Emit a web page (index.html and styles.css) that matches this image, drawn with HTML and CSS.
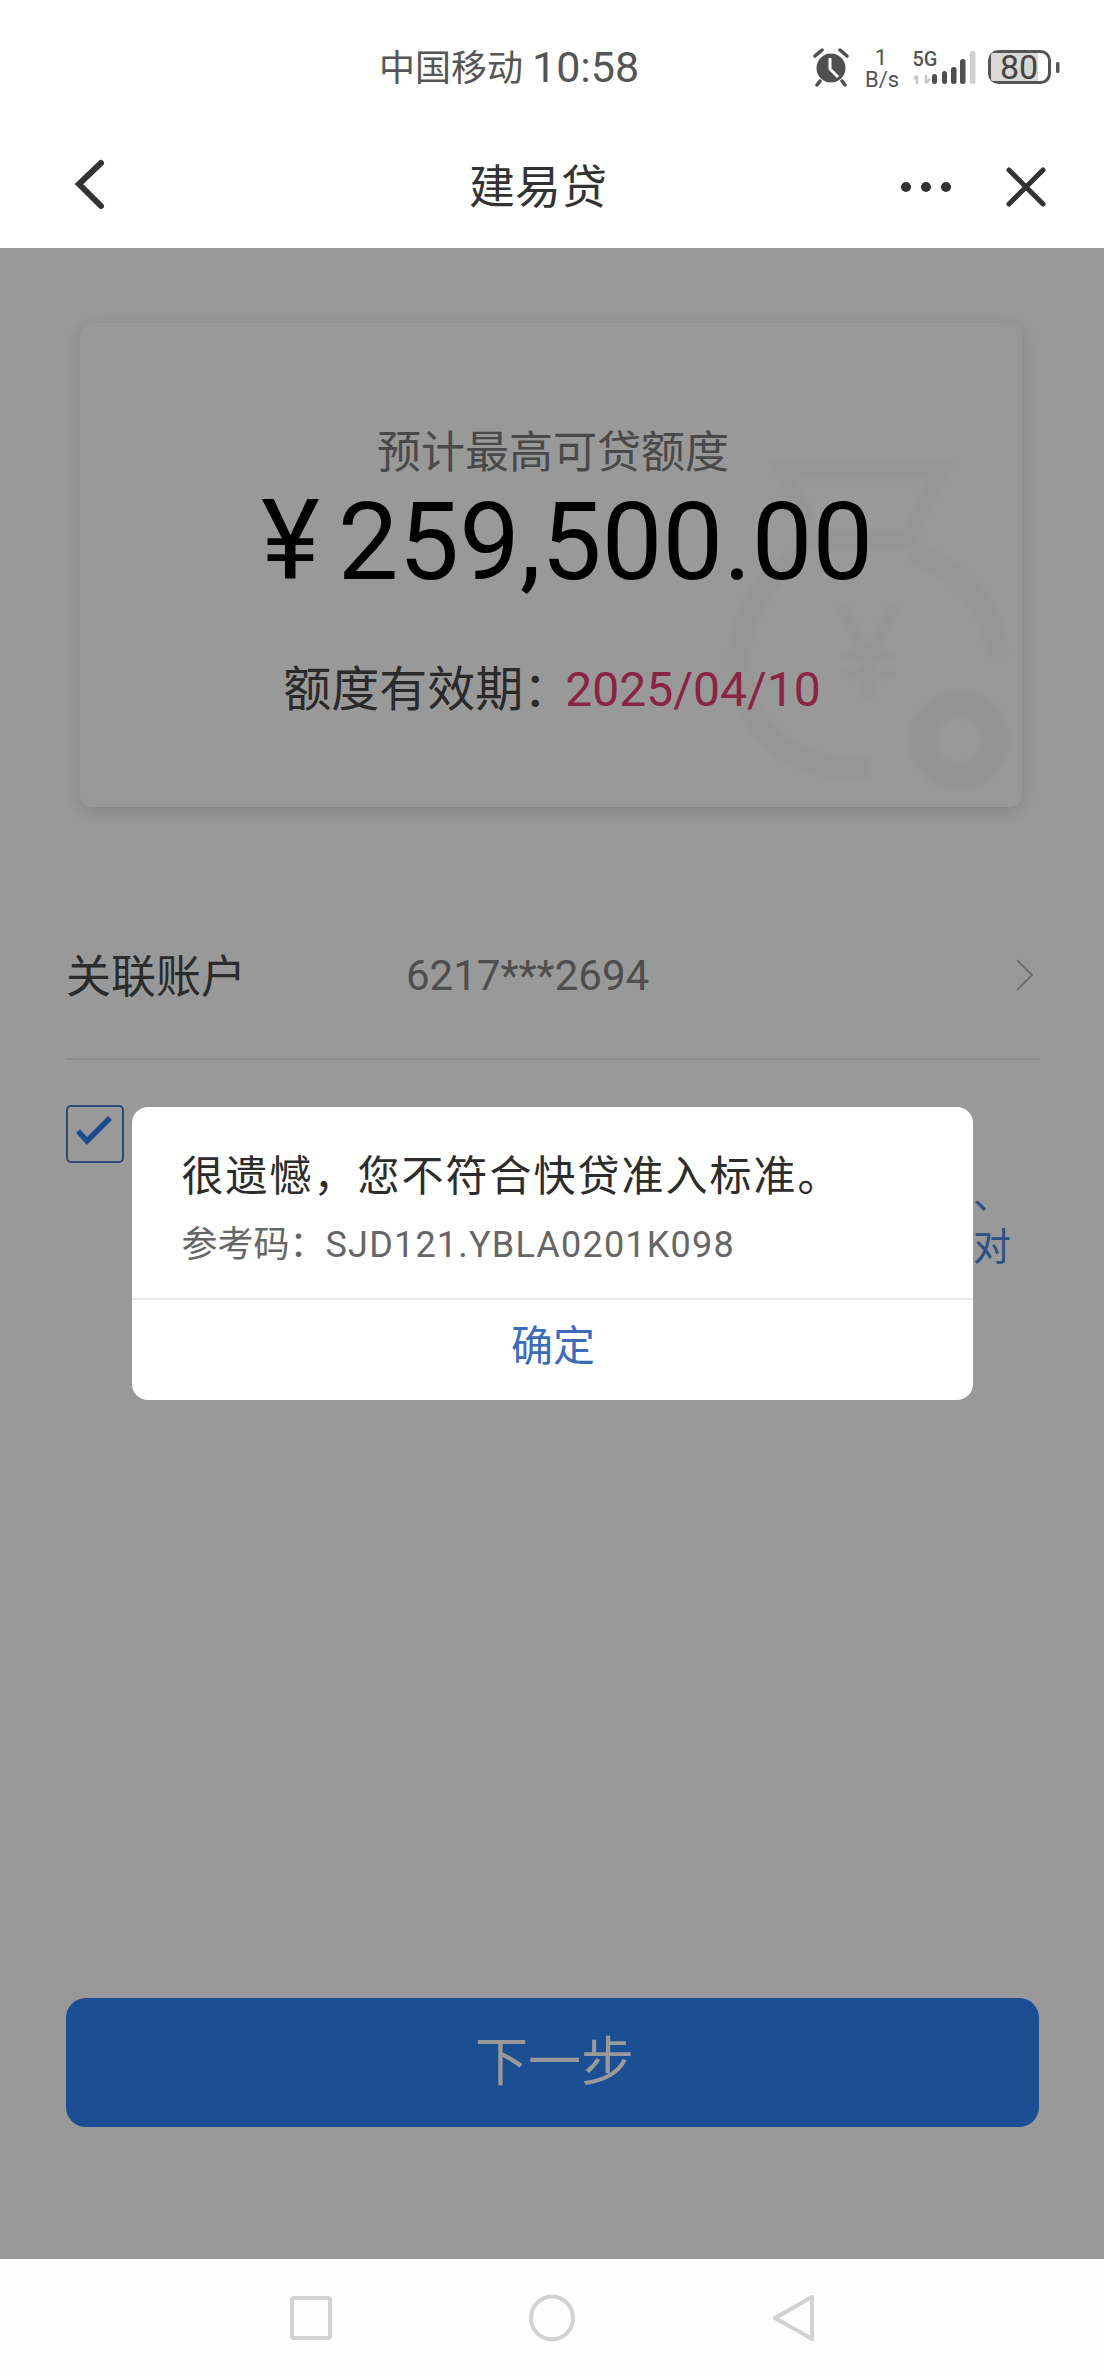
FILE: index.html
```html
<!DOCTYPE HTML>
<html>
<head>
    <meta charset="utf-8">
    <title>建易贷</title>
    <link rel="stylesheet" href="styles.css">
</head>
<body>
<div class="page">
    <div class="status-bar">
        <span class="carrier">中国移动</span>
        <span class="clock">10:58</span>
        <svg class="status-icons" width="250" height="44" viewBox="813 46 250 44">
            <circle cx="831" cy="68" r="14.5" fill="#4f4f4f"/>
            <path d="M830 58 L830 69 L838 77" fill="none" stroke="#fff" stroke-width="3"/>
            <path d="M815 56 L822 50 M847 56 L840 50 M820 81 L817 85 M842 81 L845 85" stroke="#4f4f4f" stroke-width="3.5" stroke-linecap="round"/>
            <text class="speed-text" x="881" y="65" text-anchor="middle">1</text>
            <text class="speed-text" x="882" y="87" text-anchor="middle">B/s</text>
            <text class="sim-text" x="925" y="66" text-anchor="middle">5G</text>
            <path d="M917 76 V84 M914 79 L917 76 M926 75 V83 M926 83 L930 79" stroke="#c8c8c8" stroke-width="2.5" fill="none"/>
            <rect x="932" y="74" width="5" height="10" rx="2.5" fill="#4f4f4f"/>
            <rect x="942" y="71" width="5" height="13" rx="2.5" fill="#4f4f4f"/>
            <rect x="951" y="67" width="5.5" height="17" rx="2.5" fill="#4f4f4f"/>
            <rect x="960" y="59" width="5.5" height="25" rx="2.5" fill="#4f4f4f"/>
            <rect x="970" y="51" width="5.5" height="33" rx="2.5" fill="#cfcfcf"/>
            <rect x="989.5" y="51.5" width="60" height="31" rx="9" fill="#fff" stroke="#555" stroke-width="3"/>
            <path d="M993 53 H1038 V81 H993 Q991 81 991 79 V55 Q991 53 993 53 Z" fill="#d8d8d8"/>
            <text class="battery-text" x="1019" y="79" text-anchor="middle">80</text>
            <rect x="1056" y="62" width="3.5" height="11" rx="1.5" fill="#555"/>
        </svg>
    </div>

    <div class="header">
        <svg class="back-icon" width="40" height="56" viewBox="0 0 40 56">
            <path d="M28 6 L6 27 L28 49" fill="none" stroke="#333" stroke-width="6" stroke-linecap="round" stroke-linejoin="miter"/>
        </svg>
        <div class="title">建易贷</div>
        <div class="header-right">
            <svg width="60" height="12" viewBox="0 0 60 12">
                <circle cx="6" cy="6" r="5" fill="#333"/>
                <circle cx="26" cy="6" r="5" fill="#333"/>
                <circle cx="46" cy="6" r="5" fill="#333"/>
            </svg>
            <svg width="42" height="42" viewBox="0 0 42 42">
                <path d="M4 4 L38 38 M38 4 L4 38" stroke="#333" stroke-width="5" stroke-linecap="round"/>
            </svg>
        </div>
    </div>

    <div class="content">
        <div class="card">
            <svg class="watermark" width="320" height="370" viewBox="0 0 320 370">
                <path d="M80 30 H240 L205 100 H115 Z" fill="none" stroke="#fafafa" stroke-width="16"/>
                <path d="M210 112 C262 130 292 170 296 216" fill="none" stroke="#fafafa" stroke-width="22"/>
                <path d="M95 118 C45 150 25 210 45 262 C65 310 110 332 168 328" fill="none" stroke="#fafafa" stroke-width="22"/>
                <text class="watermark-yen" x="166" y="258" text-anchor="middle">¥</text>
                <circle cx="257" cy="300" r="36" fill="none" stroke="#f9f9f9" stroke-width="28"/>
            </svg>
            <div class="card-label">预计最高可贷额度</div>
            <div class="amount"><span class="yen">¥</span>259,500.00</div>
            <div class="expiry">额度有效期：<span class="expiry-date">2025/04/10</span></div>
        </div>

        <div class="account-row">
            <span class="account-label">关联账户</span>
            <span class="account-value">6217***2694</span>
            <svg width="20" height="32" viewBox="0 0 20 32">
                <path d="M2 1 L17 16 L2 31" fill="none" stroke="#b8b8b8" stroke-width="2"/>
            </svg>
        </div>

        <div class="agree-row">
            <div class="checkbox">
                <svg width="54" height="54" viewBox="0 0 54 54">
                    <path d="M10 24 L19 34 L42 11" fill="none" stroke="#2d80ea" stroke-width="5.5"/>
                </svg>
            </div>
            <div class="agree-text">
                <div>、</div>
                <div>对</div>
            </div>
        </div>

        <div class="next-btn">下一步</div>

        <div class="overlay">
            <div class="dialog">
                <div class="dialog-body">
                    <div class="dialog-title">很遗憾，您不符合快贷准入标准。</div>
                    <div class="dialog-code">参考码：<span class="code-value">SJD121.YBLA0201K098</span></div>
                </div>
                <div class="dialog-btn">确定</div>
            </div>
        </div>
    </div>

    <div class="nav-bar">
        <svg width="48" height="48" viewBox="0 0 48 48">
            <rect x="5" y="4" width="38" height="40" rx="2" fill="none" stroke="#d2d2d2" stroke-width="4"/>
        </svg>
        <svg width="48" height="48" viewBox="0 0 48 48">
            <ellipse cx="24" cy="24" rx="21" ry="21.5" fill="none" stroke="#d2d2d2" stroke-width="4"/>
        </svg>
        <svg width="48" height="48" viewBox="0 0 48 48">
            <path d="M43 3 V45 L6 24 Z" fill="none" stroke="#d2d2d2" stroke-width="4" stroke-linejoin="round"/>
        </svg>
    </div>
</div>
</body>
</html>
```

FILE: styles.css
```css
body {
    margin: 0;
    font-family: Roboto, "Noto Sans CJK SC", sans-serif;
    background-color: #fff;
}
.page {
    display: flex;
    flex-direction: column;
    height: 2376px;
    overflow: hidden;
}

/* status bar */
.status-bar {
    display: flex;
    align-items: center;
    height: 125px;
    padding: 0 41px 0 379px;
    box-sizing: border-box;
    color: #555;
}
.carrier {
    margin-top: 4px;
    font-size: 36px;
}
.clock {
    margin-left: 9px;
    margin-top: 8px;
    font-size: 43px;
}
.status-icons {
    margin-left: auto;
    margin-top: 11px;
}
.speed-text {
    font-size: 22px;
    fill: #555;
}
.sim-text {
    font-size: 20px;
    font-weight: 500;
    fill: #555;
}
.battery-text {
    font-size: 34px;
    fill: #444;
}

/* header */
.header {
    display: flex;
    align-items: center;
    height: 123px;
    color: #333;
}
.back-icon {
    margin-left: 73px;
    margin-top: -4px;
}
.title {
    margin-left: 356px;
    margin-top: -8px;
    font-size: 46px;
}
.header-right {
    display: flex;
    align-items: center;
    gap: 45px;
    margin-left: auto;
    padding-right: 57px;
}

/* main area, dimmed by the overlay */
.content {
    position: relative;
    flex: 1;
    display: flex;
    flex-direction: column;
    padding: 75px 65px 132px 66px;
}
.card {
    position: relative;
    height: 484px;
    margin: 0 17px 0 14px;
    padding-top: 100px;
    box-sizing: border-box;
    background-color: #fff;
    border-radius: 12px;
    box-shadow: 0 4px 16px rgba(0, 0, 0, 0.14);
    text-align: center;
}
.watermark {
    position: absolute;
    right: 0;
    bottom: -3px;
    filter: blur(2px);
}
.watermark-yen {
    font-size: 130px;
    fill: #fafafa;
}
.card-label {
    position: relative;
    margin-left: 4px;
    font-size: 44px;
    line-height: 60px;
    color: #7b7b7b;
}
.amount {
    position: relative;
    margin-top: 3px;
    margin-left: 32px;
    font-size: 108px;
    line-height: 110px;
    color: #000;
}
.yen {
    margin-right: 18px;
    font-size: 112px;
}
.expiry {
    position: relative;
    margin-top: 63px;
    margin-left: 2px;
    font-size: 48px;
    line-height: 60px;
    color: #464646;
}
.expiry-date {
    margin-left: -6px;
    color: #e63d73;
}

.account-row {
    display: flex;
    align-items: center;
    margin-top: 137px;
    padding: 0 4px 52px 0;
    border-bottom: 2px solid #ededed;
}
.account-label {
    width: 340px;
    margin-top: 6px;
    font-size: 45px;
    line-height: 56px;
    color: #484848;
}
.account-value {
    flex: 1;
    font-size: 42px;
    color: #828282;
}

.agree-row {
    display: flex;
    margin-top: 45px;
}
.checkbox {
    display: flex;
    width: 58px;
    height: 58px;
    box-sizing: border-box;
    border: 2px solid #4d7bcb;
    border-radius: 5px;
}
.agree-text {
    flex: 1;
    margin-top: 64px;
    padding-right: 28px;
    font-size: 38px;
    line-height: 52px;
    color: #4e84de;
    text-align: right;
}

.next-btn {
    margin-top: auto;
    height: 129px;
    line-height: 131px;
    padding-left: 4px;
    border-radius: 20px;
    background-color: #2d82f5;
    color: #fff;
    font-size: 53px;
    text-align: center;
}

/* dialog */
.overlay {
    position: absolute;
    top: 0;
    right: 0;
    bottom: 0;
    left: 0;
    display: flex;
    align-items: center;
    justify-content: center;
    background-color: rgba(0, 0, 0, 0.4);
}
.dialog {
    width: 841px;
    background-color: #fff;
    border-radius: 16px;
}
.dialog-body {
    padding: 40px 51px 28px 50px;
    border-bottom: 2px solid #e8e8e8;
}
.dialog-title {
    font-size: 42px;
    line-height: 60px;
    letter-spacing: 2px;
    color: #2c2c2c;
}
.dialog-code {
    margin-top: 13px;
    font-size: 36px;
    line-height: 50px;
    color: #666;
}
.code-value {
    letter-spacing: 1.2px;
}
.dialog-btn {
    height: 100px;
    line-height: 94px;
    padding-left: 2px;
    font-size: 42px;
    color: #3c6cb8;
    text-align: center;
}

/* navigation bar */
.nav-bar {
    display: flex;
    justify-content: center;
    align-items: center;
    gap: 193px;
    height: 117px;
    background-color: #fdfdfd;
}
```
